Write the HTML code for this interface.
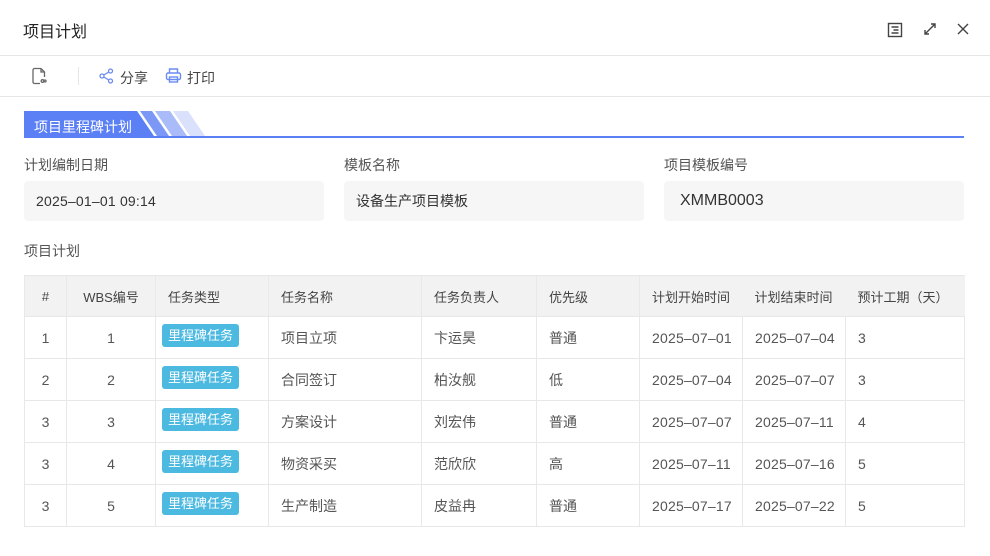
<!DOCTYPE html>
<html><head><meta charset="utf-8"><style>
*{margin:0;padding:0;box-sizing:border-box}
body{width:990px;height:556px;background:#fff;font-family:"Liberation Sans","Noto Sans CJK SC",sans-serif;color:#333;position:relative;overflow:hidden;font-size:14px}
.a{position:absolute}
.lbl{font-size:14px;color:#555}
.box{background:#f6f6f6;border-radius:4px;height:40px;line-height:40px;padding-left:12px;font-size:14px;color:#333}
table{border-collapse:collapse;position:absolute;left:24px;top:275px;width:940px;table-layout:fixed}
td,th{border:1px solid #e8e8e8;height:42px;font-size:14px;color:#555;font-weight:normal;text-align:left;padding-left:12px}
th{background:#f2f2f2;height:41px;font-size:13px;color:#444}
th.nb{border-left:none;border-right:none}
.c{text-align:center;padding-left:0}
.d{letter-spacing:0.2px}
.tag{display:inline-block;background:#4cb9e0;color:#fff;border-radius:3px;padding:0 6px;height:23px;line-height:23px;font-size:13px;margin-left:-6px;position:relative;top:-2px}
</style></head><body>
<div class="a" style="left:23px;top:18px;font-size:16px;color:#222">项目计划</div>
<svg class="a" style="left:886px;top:21px" width="18" height="18" viewBox="0 0 18 18" fill="none" stroke="#444" stroke-width="1.4"><rect x="2.5" y="2.5" width="13" height="13"/><path d="M5.5 6h7M7.5 9h5M5.5 12h7"/></svg>
<svg class="a" style="left:922px;top:21px" width="16" height="16" viewBox="0 0 16 16" fill="none" stroke="#444" stroke-width="1.4"><path d="M3 13l10-10M9 3h4v4M3 9v4h4"/></svg>
<svg class="a" style="left:956px;top:22px" width="14" height="14" viewBox="0 0 14 14" stroke="#444" stroke-width="1.4"><path d="M2 2l10 10M12 2L2 12"/></svg>
<div class="a" style="left:0;top:55px;width:990px;height:42px;border-top:1px solid #e6e6e6;border-bottom:1px solid #e6e6e6"></div>
<svg class="a" style="left:31px;top:67px" width="16" height="18" viewBox="0 0 16 18" fill="none" stroke="#666" stroke-width="1.3"><path d="M10 1.5H3.5a1.5 1.5 0 0 0-1.5 1.5v12a1.5 1.5 0 0 0 1.5 1.5H9M10 1.5l3.5 3.5V10M10 1.5V5h3.5"/><circle cx="11.5" cy="14" r="1.3"/><circle cx="14" cy="14" r="1"/></svg>
<div class="a" style="left:78px;top:67px;width:1px;height:18px;background:#e6e6e6"></div>
<svg class="a" style="left:99px;top:68px" width="15" height="16" viewBox="0 0 15 16" fill="none" stroke="#6b8cf2" stroke-width="1.3"><circle cx="11.5" cy="3" r="2"/><circle cx="3" cy="8" r="2"/><circle cx="11.5" cy="13" r="2"/><path d="M4.8 7l5-3M4.8 9l5 3"/></svg>
<div class="a" style="left:120px;top:68px;color:#444">分享</div>
<svg class="a" style="left:165px;top:67px" width="17" height="17" viewBox="0 0 17 17" fill="none" stroke="#6b8cf2" stroke-width="1.4"><path d="M4.5 6V2h8v4"/><rect x="1.5" y="6" width="14" height="6.5" rx="1.5"/><rect x="4.5" y="10" width="8" height="5"/></svg>
<div class="a" style="left:187px;top:68px;color:#444">打印</div>
<svg class="a" style="left:24px;top:111px" width="940" height="28">
<polygon points="0,0 113,0 130,25 0,25" fill="#5b7ff5"/>
<polygon points="116,0 128,0 145,25 133,25" fill="#7c98f7"/>
<polygon points="131,0 146,0 163,25 148,25" fill="#a9bbf9"/>
<polygon points="149,0 164,0 181,25 166,25" fill="#d9e1fc"/>
<rect x="0" y="25" width="940" height="2" fill="#5b7ff5"/>
</svg>
<div class="a" style="left:34px;top:117px;color:#fff;font-size:14px">项目里程碑计划</div>
<div class="a lbl" style="left:24px;top:155px">计划编制日期</div>
<div class="a lbl" style="left:344px;top:155px">模板名称</div>
<div class="a lbl" style="left:664px;top:155px">项目模板编号</div>
<div class="a box d" style="left:24px;top:181px;width:300px">2025–01–01 09:14</div>
<div class="a box" style="left:344px;top:181px;width:300px">设备生产项目模板</div>
<div class="a box" style="left:664px;top:181px;width:300px;padding-left:16px;font-size:16px">XMMB0003</div>
<div class="a lbl" style="left:24px;top:241px">项目计划</div>
<table>
<colgroup><col style="width:42px"><col style="width:89px"><col style="width:113px"><col style="width:153px"><col style="width:115px"><col style="width:103px"><col style="width:103px"><col style="width:103px"><col style="width:119px"></colgroup>
<tr><th class="c">#</th><th class="c">WBS编号</th><th>任务类型</th><th>任务名称</th><th>任务负责人</th><th>优先级</th><th style="border-right:none">计划开始时间</th><th class="nb">计划结束时间</th><th class="nb">预计工期（天）</th></tr>
<tr><td class="c">1</td><td class="c">1</td><td><span class="tag">里程碑任务</span></td><td>项目立项</td><td>卞运昊</td><td>普通</td><td class="d">2025–07–01</td><td class="d">2025–07–04</td><td>3</td></tr>
<tr><td class="c">2</td><td class="c">2</td><td><span class="tag">里程碑任务</span></td><td>合同签订</td><td>柏汝舰</td><td>低</td><td class="d">2025–07–04</td><td class="d">2025–07–07</td><td>3</td></tr>
<tr><td class="c">3</td><td class="c">3</td><td><span class="tag">里程碑任务</span></td><td>方案设计</td><td>刘宏伟</td><td>普通</td><td class="d">2025–07–07</td><td class="d">2025–07–11</td><td>4</td></tr>
<tr><td class="c">3</td><td class="c">4</td><td><span class="tag">里程碑任务</span></td><td>物资采买</td><td>范欣欣</td><td>高</td><td class="d">2025–07–11</td><td class="d">2025–07–16</td><td>5</td></tr>
<tr><td class="c">3</td><td class="c">5</td><td><span class="tag">里程碑任务</span></td><td>生产制造</td><td>皮益冉</td><td>普通</td><td class="d">2025–07–17</td><td class="d">2025–07–22</td><td>5</td></tr>
</table>
</body></html>
